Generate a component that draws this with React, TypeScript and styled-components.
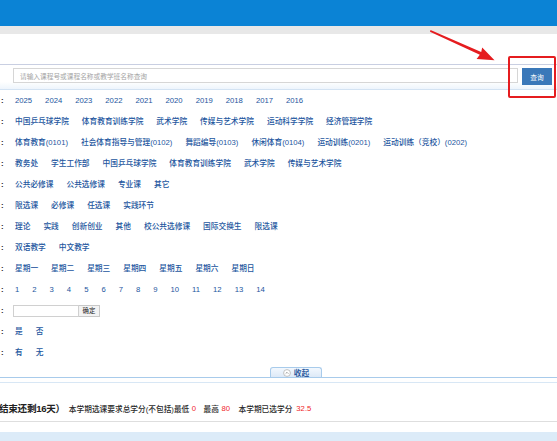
import React from "react";
import styled, { createGlobalStyle } from "styled-components";

const GlobalStyle = createGlobalStyle`
  html, body { margin: 0; padding: 0; background: #ffffff; }
  body { font-family: "Liberation Sans", "Noto Sans CJK SC", sans-serif; }
  * { box-sizing: border-box; }
`;

const Page = styled.div`
  position: relative;
  width: 557px;
  height: 441px;
  overflow: hidden;
  background: #ffffff;
  font-family: "Liberation Sans", "Noto Sans CJK SC", sans-serif;
  font-size: 7.7px;
`;

const TopBar = styled.div`
  height: 26px;
  background: #0b83d5;
`;

const GrayBand = styled.div`
  height: 8px;
  background: #e8e8e8;
`;

const HeaderSpace = styled.div`
  height: 30px;
  background: #ffffff;
`;

const SearchRow = styled.div`
  display: flex;
  align-items: flex-start;
  height: 26px;
  padding: 3px 5px 0 13px;
  border-top: 1px solid #c9cfe2;
  border-bottom: 1px solid #d3e3f3;
  background: linear-gradient(#ffffff 0%, #ffffff 70%, #eef5fc 100%);
`;

const SearchInput = styled.div`
  flex: 1;
  height: 15px;
  border: 1px solid #d6d6d6;
  background: #ffffff;
  display: flex;
  align-items: center;
  padding-left: 6px;
  color: #a4a4a4;
  font-size: 6.7px;
  white-space: nowrap;
`;

const SearchButton = styled.div`
  width: 30px;
  height: 17px;
  margin-left: 4px;
  background: #3a78b9;
  color: #ffffff;
  font-size: 6.7px;
  display: flex;
  align-items: center;
  justify-content: center;
`;

const Panel = styled.div`
  display: flex;
  flex-direction: column;
`;

const Row = styled.div`
  display: flex;
  align-items: center;
  height: 21px;
`;

const Label = styled.span`
  width: 15px;
  padding-left: 1px;
  color: #222;
  font-weight: bold;
  font-size: 7.7px;
`;

const Items = styled.div`
  display: flex;
  align-items: center;
  gap: 13px;
  white-space: nowrap;
`;

const Item = styled.span`
  color: #23569e;
  font-size: 7.7px;
  line-height: 10px;
  font-weight: 500;
`;

const SmallInput = styled.div`
  width: 66px;
  height: 12px;
  margin-left: -2px;
  border: 1px solid #d0d0d0;
  background: #fff;
`;

const SmallButton = styled.div`
  width: 21px;
  height: 12px;
  border: 1px solid #c8c8c8;
  border-left: none;
  background: #f3f3f3;
  color: #222;
  font-size: 6.4px;
  display: flex;
  align-items: center;
  justify-content: center;
`;

const CollapseBar = styled.div`
  height: 15px;
  display: flex;
  align-items: flex-end;
  padding-left: 270px;
  border-bottom: 1px solid #a8cbeb;
`;

const Tab = styled.div`
  width: 52px;
  height: 10px;
  border: 1px solid #a8cbeb;
  border-bottom: none;
  border-radius: 3px 3px 0 0;
  background: linear-gradient(#f3f8fe, #dde9f7);
  display: flex;
  align-items: center;
  justify-content: center;
  gap: 3px;
  color: #2d5b9f;
  font-size: 7.7px;
  font-weight: bold;
`;

const Gap = styled.div`
  height: 4px;
`;

const Summary = styled.div`
  height: 40px;
  border-top: 1px solid #d8e7f5;
  border-bottom: 1px solid #dedede;
  padding-top: 12px;
  display: flex;
  align-items: center;
  white-space: nowrap;
  color: #333;
`;

const Countdown = styled.span`
  margin-left: -1px;
  font-size: 9.6px;
  font-weight: bold;
  color: #222;
  letter-spacing: -0.3px;
`;

const Req = styled.span<{ $gap?: number }>`
  margin-left: ${(p) => p.$gap ?? 0}px;
  font-size: 7.7px;
  color: #2a2a2a;
  font-weight: 500;
`;

const Red = styled.span<{ $gap?: number }>`
  margin-left: ${(p) => p.$gap ?? 0}px;
  font-size: 7.7px;
  color: #f0262a;
`;

const WhiteGap = styled.div`
  height: 10px;
`;

const FooterBand = styled.div`
  height: 20px;
  background: #dcebf8;
`;

const RedBox = styled.div`
  position: absolute;
  left: 508px;
  top: 56px;
  width: 48px;
  height: 42px;
  border: 2px solid #e51c1f;
  border-radius: 2px;
  pointer-events: none;
`;

const Overlay = styled.svg`
  position: absolute;
  left: 0;
  top: 0;
  pointer-events: none;
`;

const rows: string[][] = [
  ["2025", "2024", "2023", "2022", "2021", "2020", "2019", "2018", "2017", "2016"],
  ["中国乒乓球学院", "体育教育训练学院", "武术学院", "传媒与艺术学院", "运动科学学院", "经济管理学院"],
  ["体育教育(0101)", "社会体育指导与管理(0102)", "舞蹈编导(0103)", "休闲体育(0104)", "运动训练(0201)", "运动训练（竞校）(0202)"],
  ["教务处", "学生工作部", "中国乒乓球学院", "体育教育训练学院", "武术学院", "传媒与艺术学院"],
  ["公共必修课", "公共选修课", "专业课", "其它"],
  ["限选课", "必修课", "任选课", "实践环节"],
  ["理论", "实践", "创新创业", "其他", "校公共选修课", "国际交换生", "限选课"],
  ["双语教学", "中文教学"],
  ["星期一", "星期二", "星期三", "星期四", "星期五", "星期六", "星期日"],
  ["1", "2", "3", "4", "5", "6", "7", "8", "9", "10", "11", "12", "13", "14"],
];

const tailRows: string[][] = [
  ["是", "否"],
  ["有", "无"],
];

function FilterRow({ items }: { items: string[] }) {
  return (
    <Row>
      <Label>:</Label>
      <Items>
        {items.map((t, i) => (
          <Item key={i}>{t}</Item>
        ))}
      </Items>
    </Row>
  );
}

export default function App() {
  return (
    <>
      <GlobalStyle />
      <Page>
        <TopBar />
        <GrayBand />
        <HeaderSpace />
        <SearchRow>
          <SearchInput>请输入课程号或课程名称或教学班名称查询</SearchInput>
          <SearchButton>查询</SearchButton>
        </SearchRow>
        <Panel>
          {rows.map((r, i) => (
            <FilterRow key={i} items={r} />
          ))}
          <Row>
            <Label>:</Label>
            <SmallInput />
            <SmallButton>确定</SmallButton>
          </Row>
          {tailRows.map((r, i) => (
            <FilterRow key={"t" + i} items={r} />
          ))}
        </Panel>
        <CollapseBar>
          <Tab>
            <svg width="8" height="8" viewBox="0 0 8 8">
              <circle cx="4" cy="4" r="3.4" fill="#ffffff" stroke="#b4b4b4" strokeWidth="0.8" />
              <path d="M2.6 4.7 L4 3.3 L5.4 4.7" fill="none" stroke="#8a8a8a" strokeWidth="0.8" />
            </svg>
            <span>收起</span>
          </Tab>
        </CollapseBar>
        <Gap />
        <Summary>
          <Countdown>结束还剩16天）</Countdown>
          <Req $gap={4}>本学期选课要求总学分(不包括)最低</Req>
          <Red $gap={2.5}>0</Red>
          <Req $gap={7.5}>最高</Req>
          <Red $gap={2.5}>80</Red>
          <Req $gap={8.5}>本学期已选学分</Req>
          <Red $gap={4}>32.5</Red>
        </Summary>
        <WhiteGap />
        <FooterBand />
        <RedBox />
        <Overlay width="557" height="441" viewBox="0 0 557 441">
          <polygon
            points="430.5,30 481.2,52 482.2,47.6 494.5,60.3 476.6,59 479.8,54.8 430,31.8"
            fill="#e51c1f"
          />
        </Overlay>
      </Page>
    </>
  );
}
